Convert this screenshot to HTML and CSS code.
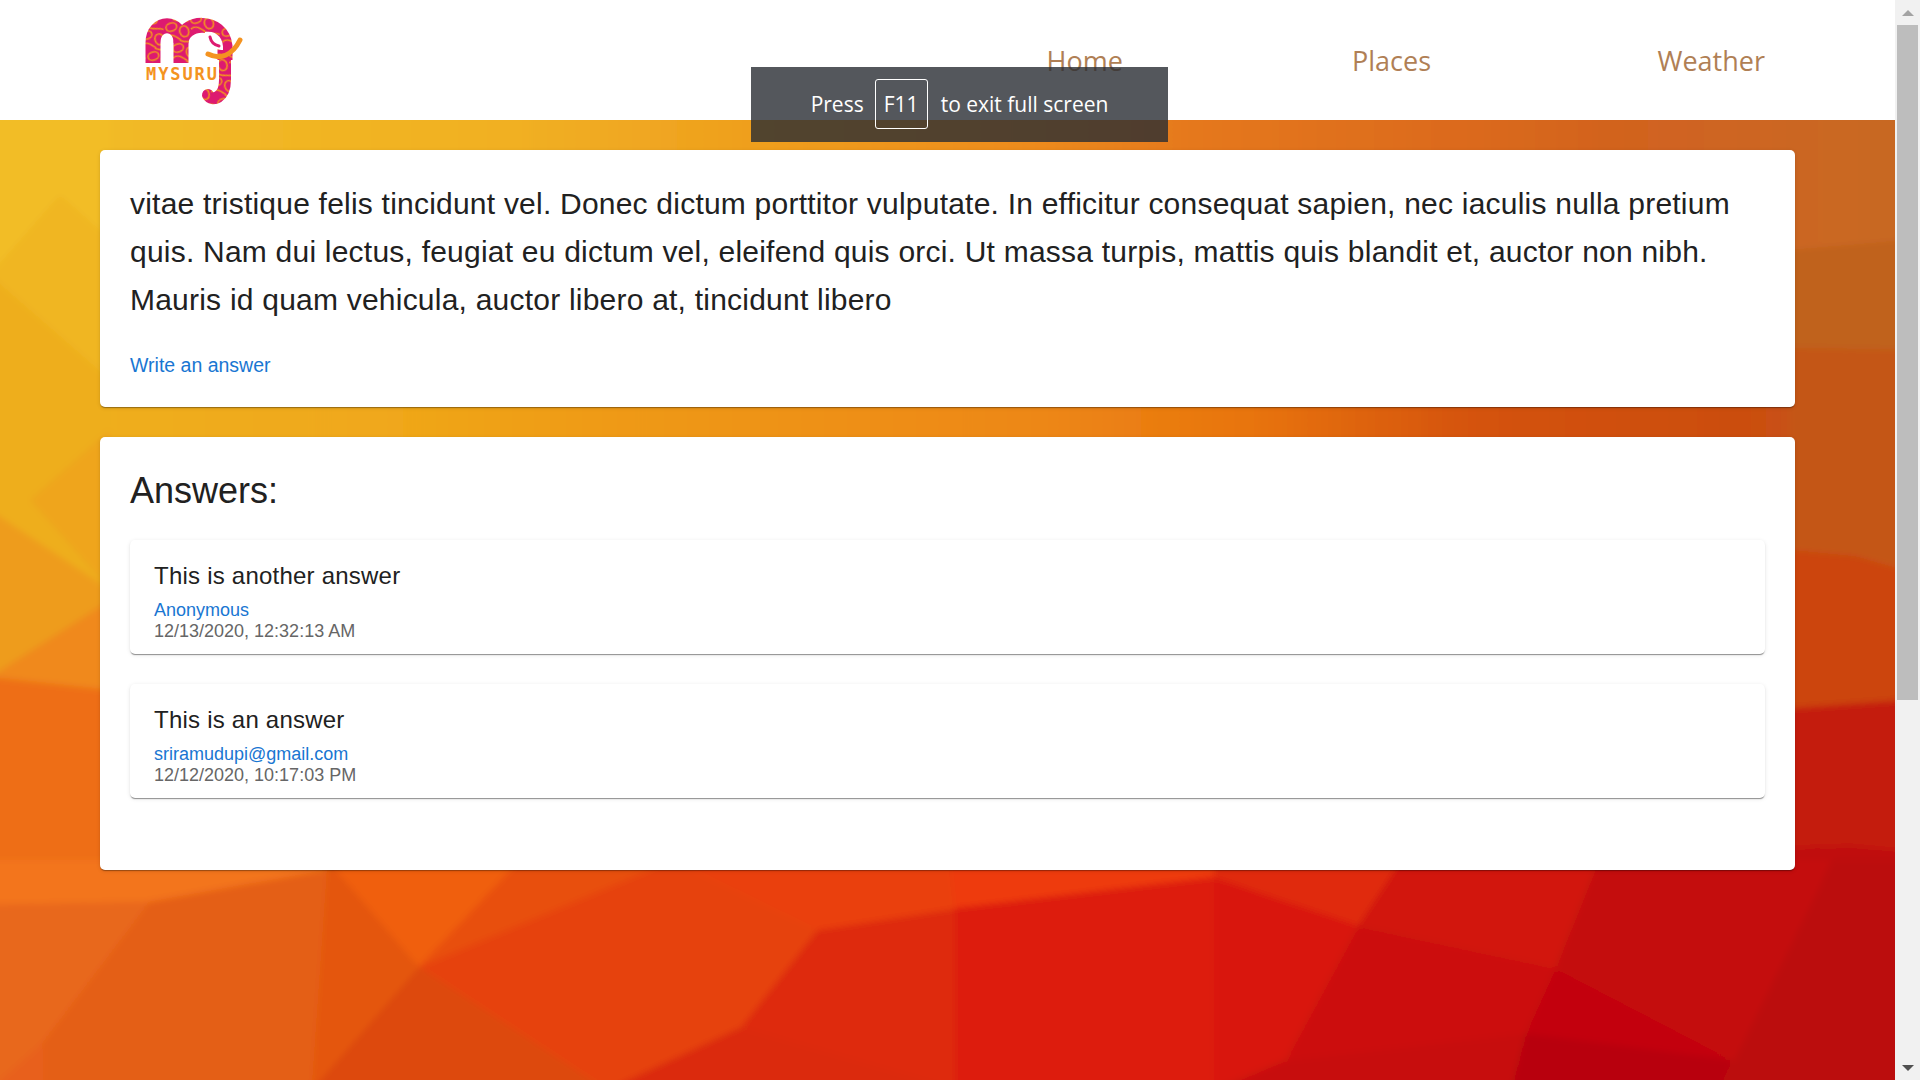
FILE: index.html
```html
<!DOCTYPE html>
<html lang="en">
<head>
<meta charset="utf-8">
<title>Mysuru</title>
<link rel="stylesheet" href="styles.css">
</head>
<body>
<div class="app">
  <div class="page">
    <svg class="backdrop" viewBox="0 0 1895 1080" preserveAspectRatio="none" aria-hidden="true">
      <defs>
        <filter id="soft" x="-2%" y="-2%" width="104%" height="104%"><feGaussianBlur stdDeviation="3"/></filter>
        <linearGradient id="stripTop" gradientUnits="userSpaceOnUse" x1="0" y1="0" x2="1895" y2="0">
          <stop offset="0" stop-color="#f2bd28"/>
          <stop offset=".27" stop-color="#f1b022"/>
          <stop offset=".42" stop-color="#ef9c1e"/>
          <stop offset=".55" stop-color="#ec8a1c"/>
          <stop offset=".63" stop-color="#e5781c"/>
          <stop offset=".77" stop-color="#dc6a1c"/>
          <stop offset=".85" stop-color="#d2631f"/>
          <stop offset="1" stop-color="#c86824"/>
        </linearGradient>
        <linearGradient id="stripMid" gradientUnits="userSpaceOnUse" x1="0" y1="0" x2="1895" y2="0">
          <stop offset="0" stop-color="#efb01c"/>
          <stop offset=".2" stop-color="#f0a81a"/>
          <stop offset=".32" stop-color="#ef9a17"/>
          <stop offset=".55" stop-color="#ed8714"/>
          <stop offset=".66" stop-color="#e8740f"/>
          <stop offset=".78" stop-color="#d4520f"/>
          <stop offset=".92" stop-color="#cb4e10"/>
          <stop offset="1" stop-color="#c2581a"/>
        </linearGradient>
      </defs>
      <g filter="url(#soft)">
        <rect x="-10" y="100" width="1915" height="990" fill="#e8601a"/>
        <rect x="-10" y="100" width="1915" height="230" fill="url(#stripTop)"/>
        <rect x="-10" y="330" width="1915" height="230" fill="url(#stripMid)"/>
        <rect x="-10" y="200" width="120" height="500" fill="#eeae1c"/>
        <polygon fill="#f2bd28" points="-10,100 110,100 110,240 60,195 -10,275"/>
        <polygon fill="#f0b622" points="-10,275 60,195 110,240 110,380"/>
        <polygon fill="#c0621a" points="1790,250 1850,245 1905,240 1905,350 1790,348"/>
        <polygon fill="#efa51a" points="30,500 110,430 110,590"/>
        <polygon fill="#ee9c1a" points="-10,510 110,590 110,690 -10,677"/>
        <polygon fill="#f0891a" points="-10,677 110,600 110,690"/>
        <polygon fill="#ee6e18" points="-10,677 110,690 400,690 400,880 -10,880"/>
        <polygon fill="#c45616" points="1790,348 1905,350 1905,570 1855,556 1790,560"/>
        <polygon fill="#cc4410" points="1690,540 1855,556 1905,570 1905,700 1795,716 1690,716"/>
        <polygon fill="#c41e0c" points="1690,716 1905,700 1905,850 1850,845 1690,850"/>
        <polygon fill="#c00808" points="1690,850 1850,845 1905,850 1905,880 1690,880"/>
        <polygon fill="#f3751a" points="-10,860 328,860 328,870 150,902 -10,905"/>
        <polygon fill="#e8681a" points="-10,905 150,902 43,1043 -10,1090"/>
        <polygon fill="#e45f12" points="150,902 328,870 312,1090 43,1090 43,1043"/>
        <polygon fill="#e4560f" points="328,860 419,967 312,1090"/>
        <polygon fill="#f05e0c" points="328,860 520,860 419,967"/>
        <polygon fill="#e8500f" points="520,860 673,860 419,967"/>
        <polygon fill="#e6430d" points="419,967 673,860 817,930 741,1027 606,1090"/>
        <polygon fill="#dd4a10" points="419,967 606,1090 312,1090"/>
        <polygon fill="#ea410c" points="673,860 960,860 960,908 817,930"/>
        <polygon fill="#de2c0c" points="817,930 960,908 960,1090 741,1027"/>
        <polygon fill="#db2c0c" points="606,1090 741,1027 960,1090"/>
        <polygon fill="#ee3a08" points="950,860 1214,860 1214,877 955,908"/>
        <polygon fill="#dd1e08" points="955,908 1214,877 1214,1090 955,1090"/>
        <polygon fill="#e02c08" points="1214,860 1401,860 1358,925 1214,877"/>
        <polygon fill="#d9190a" points="1214,877 1358,925 1285,1060 1214,1090"/>
        <polygon fill="#cc0d08" points="1358,925 1555,967 1525,1033 1285,1060"/>
        <polygon fill="#d2180a" points="1401,860 1598,860 1555,967 1358,925"/>
        <polygon fill="#c70f0a" points="1285,1060 1525,1033 1510,1090 1214,1090"/>
        <polygon fill="#c40c0a" points="1598,860 1832,860 1734,1060 1555,967"/>
        <polygon fill="#c3060a" points="1555,967 1734,1060 1525,1033"/>
        <polygon fill="#b80008" points="1525,1033 1734,1060 1720,1090 1510,1090"/>
        <polygon fill="#bb0a08" points="1832,860 1905,860 1905,1090 1720,1090 1734,1060"/>
      </g>
    </svg>

    <header class="topbar">
      <a class="logo" href="#" aria-label="Mysuru">
        <svg class="logo-art" viewBox="0 0 120 100">
          <defs>
            <pattern id="kolam" width="26" height="22" patternUnits="userSpaceOnUse" patternTransform="rotate(-18)">
              <rect width="26" height="22" fill="#dd1a70"/>
              <ellipse cx="8" cy="7" rx="5.5" ry="4" fill="none" stroke="#f49320" stroke-width="1.6"/>
              <ellipse cx="19" cy="15" rx="4.5" ry="5.5" fill="none" stroke="#f49320" stroke-width="1.6"/>
              <path d="M0 15C6 12 10 18 13 22M12 0C16 5 22 3 26 7" fill="none" stroke="#f49320" stroke-width="1.6"/>
            </pattern>
          </defs>
          <path class="logo-body" d="M23 53V33C23 10 51 10 51 33V53"/>
          <path class="logo-body" d="M51 33C52 10 92 8 95 36V50"/>
          <path class="logo-trunk" d="M95 46V70C95 88 82 92 78 85"/>
          <path class="logo-eye" d="M75 22C86 20 94 28 93 40C84 40 74 34 75 22Z"/>
          <path class="logo-eye-mark" d="M80 27C81 32 84 35 89 36"/>
          <path class="logo-tusk" d="M78 44C90 50 102 46 110 30"/>
          <text class="logo-word" x="16" y="70" textLength="71" lengthAdjust="spacing">MYSURU</text>
        </svg>
      </a>
      <nav class="nav">
        <a href="#">Home</a>
        <a href="#">Places</a>
        <a href="#">Weather</a>
      </nav>
    </header>

    <main class="content">
      <section class="card">
        <p class="question">vitae tristique felis tincidunt vel. Donec dictum porttitor vulputate. In efficitur consequat sapien, nec iaculis nulla pretium quis. Nam dui lectus, feugiat eu dictum vel, eleifend quis orci. Ut massa turpis, mattis quis blandit et, auctor non nibh. Mauris id quam vehicula, auctor libero at, tincidunt libero</p>
        <a class="write-link" href="#">Write an answer</a>
      </section>
      <section class="card answers">
        <h2 class="answers-title">Answers:</h2>
        <article class="answer">
          <p class="answer-text">This is another answer</p>
          <a class="answer-author" href="#">Anonymous</a>
          <time class="answer-date">12/13/2020, 12:32:13 AM</time>
        </article>
        <article class="answer">
          <p class="answer-text">This is an answer</p>
          <a class="answer-author" href="#">sriramudupi@gmail.com</a>
          <time class="answer-date">12/12/2020, 10:17:03 PM</time>
        </article>
      </section>
    </main>
  </div>

  <div class="scrollbar" aria-hidden="true">
    <div class="arrow-box"><span class="arrow-up"></span></div>
    <div class="track"><div class="thumb"></div></div>
    <div class="arrow-box"><span class="arrow-down"></span></div>
  </div>

  <div class="fullscreen-note">
    <span>Press</span><kbd class="key">F11</kbd><span>to exit full screen</span>
  </div>
</div>
</body>
</html>
```
FILE: styles.css
```css
* { box-sizing: border-box; }
html, body { margin: 0; height: 100%; overflow: hidden; }
body { font-family: "Liberation Sans", Arial, sans-serif; color: #212121; }

.app { position: relative; display: flex; height: 100vh; overflow: hidden; }
.page { position: relative; flex: 1; min-width: 0; background: #e8601a; }
.backdrop { position: absolute; inset: 0; width: 100%; height: 100%; }

.topbar {
  position: relative;
  display: flex;
  align-items: center;
  justify-content: space-between;
  height: 120px;
  padding: 0 130px;
  background: #fff;
}
.logo { display: block; width: 120px; height: 100px; }
.logo-art { display: block; width: 120px; height: 100px; }
.logo-body { fill: none; stroke: url(#kolam); stroke-width: 15; }
.logo-trunk { fill: none; stroke: url(#kolam); stroke-width: 12; stroke-linecap: round; }
.logo-eye { fill: #fff; }
.logo-eye-mark { fill: none; stroke: #dd1a70; stroke-width: 3; stroke-linecap: round; }
.logo-tusk { fill: none; stroke: #f49320; stroke-width: 5; stroke-linecap: round; }
.logo-word { font-family: "DejaVu Sans Mono", monospace; font-size: 17px; font-weight: 700; fill: #f49320; }

.nav {
  display: grid;
  grid-template-columns: 305.5px 305.5px auto;
  padding-top: 2px;
  font-family: "Open Sans", sans-serif;
  font-size: 27px;
  line-height: 40px;
}
.nav a { color: #b07f55; text-decoration: none; }

.content {
  position: relative;
  display: flex;
  flex-direction: column;
  gap: 30px;
  padding: 30px 100px 0;
}
.card {
  padding: 30px;
  background: #fff;
  border-radius: 5px;
  box-shadow: 0 2px 1px -1px rgba(0,0,0,.2), 0 1px 1px rgba(0,0,0,.14), 0 1px 4px rgba(0,0,0,.12);
}
.question {
  margin: 0 0 29px;
  font-size: 30px;
  line-height: 48px;
  letter-spacing: .22px;
  color: #212121;
}
.write-link {
  display: block;
  font-size: 19.5px;
  line-height: 24px;
  color: #1976d2;
  text-decoration: none;
}
.answers { height: 433px; }
.answers-title {
  margin: 0 0 28px;
  padding-top: 2px;
  font-size: 36px;
  font-weight: 400;
  line-height: 43px;
}
.answer {
  display: flex;
  flex-direction: column;
  height: 114px;
  margin-bottom: 30px;
  padding: 21px 24px 0;
  border-radius: 5px;
  box-shadow: 0 2px 1px -1px rgba(0,0,0,.3), 0 1px 1px rgba(0,0,0,.14), 0 1px 4px rgba(0,0,0,.1);
}
.answer-text {
  margin: 0 0 9px;
  font-size: 24px;
  line-height: 30px;
  letter-spacing: .00938em;
}
.answer-author {
  font-size: 18px;
  line-height: 21px;
  color: #1976d2;
  text-decoration: none;
}
.answer-date {
  font-size: 18px;
  line-height: 21px;
  color: #666;
}

.scrollbar {
  display: flex;
  flex-direction: column;
  flex: none;
  width: 25px;
  background: #f1f1f1;
}
.arrow-box { display: flex; align-items: center; justify-content: center; height: 25px; flex: none; }
.arrow-up, .arrow-down { width: 0; height: 0; border-left: 6px solid transparent; border-right: 6px solid transparent; }
.arrow-up { border-bottom: 6px solid #a3a3a3; }
.arrow-down { border-top: 6px solid #505050; }
.track { flex: 1; padding: 0 2px; }
.thumb { height: 675px; background: #bdbdbd; }

.fullscreen-note {
  position: absolute;
  top: 67px;
  left: 751px;
  display: flex;
  align-items: center;
  justify-content: center;
  gap: 12px;
  width: 417px;
  height: 75px;
  padding-bottom: 1px;
  font-family: "Open Sans", sans-serif;
  font-size: 21px;
  color: #fff;
  background: rgba(41,45,51,.8);
}
.key {
  display: flex;
  align-items: center;
  justify-content: center;
  width: 53px;
  height: 50px;
  margin: 0 1px 0 -1px;
  font: inherit;
  border: 1.5px solid #fff;
  border-radius: 3px;
}
```
